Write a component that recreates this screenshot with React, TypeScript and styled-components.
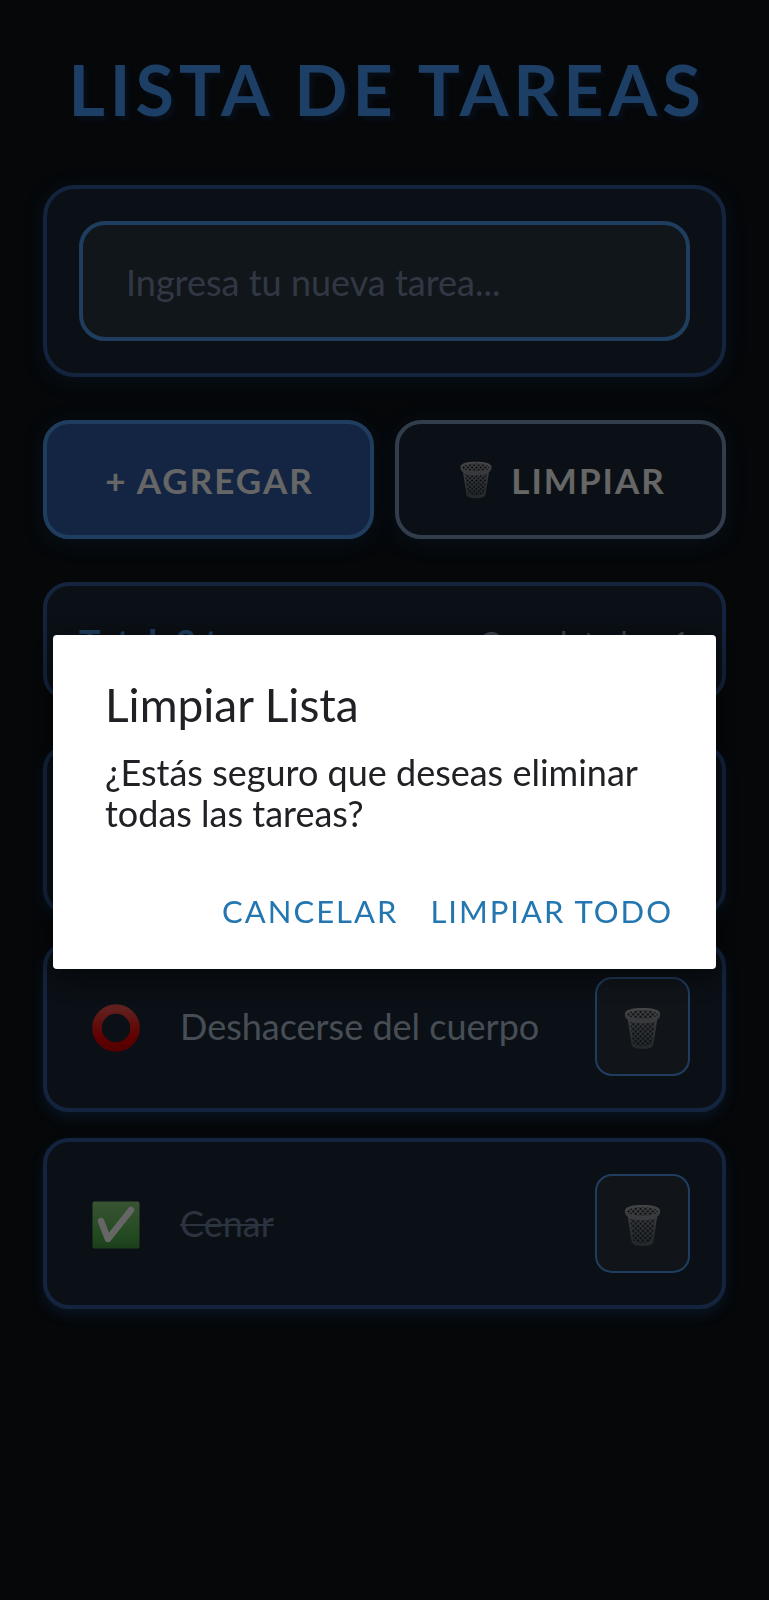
import React, { useId } from 'react';
import styled, { createGlobalStyle } from 'styled-components';

const GlobalStyle = createGlobalStyle`
  *, *::before, *::after { box-sizing: border-box; }
  body {
    margin: 0;
    background: #0d1218;
    font-family: Lato, "Liberation Sans", sans-serif;
  }
  button, input { font-family: inherit; margin: 0; }
  h1, h2, p, ul { margin: 0; padding: 0; }
`;

const Screen = styled.main`
  display: flex;
  flex-direction: column;
  gap: 43px;
  min-height: 100vh;
  padding: 49px 43px;
  background: #0d1218;
`;

const Title = styled.h1`
  height: 93px;
  padding-left: 5px;
  line-height: 80px;
  text-align: center;
  white-space: nowrap;
  font-size: 70px;
  font-weight: 700;
  letter-spacing: 5px;
  color: #4a9eff;
  text-shadow: 4px 4px 4px rgba(30, 90, 170, 0.25);
`;

const Card = styled.section`
  display: flex;
  align-items: center;
  justify-content: space-between;
  padding: 32px;
  background: #1b2837;
  border: 4px solid #325a9c;
  border-radius: 32px;
  box-shadow: 0 4px 20px rgba(40, 110, 190, 0.25);
`;

const TaskInput = styled.input`
  width: 100%;
  height: 120px;
  padding: 2px 43px 0;
  font-size: 36px;
  color: #ffffff;
  background: #2b3745;
  border: 4px solid #4f9cee;
  border-radius: 26px;
  outline: none;
  &::placeholder { color: #7a8ca8; opacity: 1; }
`;

const Actions = styled.div`
  display: grid;
  grid-template-columns: 1fr 1fr;
  gap: 21px;
`;

const ActionButton = styled.button<{ $primary?: boolean }>`
  display: flex;
  align-items: center;
  justify-content: center;
  gap: 16px;
  height: 119px;
  padding: 0 0 0 2px;
  font-size: 35px;
  font-weight: 700;
  letter-spacing: 2px;
  color: #ffffff;
  background: ${(p) => (p.$primary ? '#305ea5' : '#1b2837')};
  border: 4px solid ${(p) => (p.$primary ? '#4f9cee' : '#7a98bc')};
  border-radius: 26px;
  box-shadow: 0 4px 20px rgba(40, 110, 190, 0.25);
`;

const Stats = styled(Card)`
  height: 119px;
  border-radius: 26px;
  box-shadow: none;
`;

const Total = styled.span`
  font-size: 36px;
  font-weight: 700;
  color: #4f9cee;
`;

const Completed = styled.span`
  font-size: 31px;
  color: #a0b0c8;
`;

const TaskList = styled.ul`
  display: flex;
  flex-direction: column;
  gap: 26px;
  list-style: none;
`;

const TaskRow = styled(Card)`
  justify-content: flex-start;
  border-radius: 26px;
  box-shadow: 0 6px 12px rgba(40, 110, 190, 0.35);
`;

const StatusButton = styled.button`
  display: flex;
  padding: 3px 0 0;
  margin: 0 40px 0 13px;
  background: none;
  border: 0;
`;

const TaskText = styled.span<{ $done: boolean }>`
  flex: 1;
  line-height: 42px;
  padding-bottom: 2px;
  font-size: 36px;
  color: ${(p) => (p.$done ? '#6a7f9c' : '#b2c0d2')};
  text-decoration: ${(p) => (p.$done ? 'line-through' : 'none')};
  text-decoration-thickness: 2px;
`;

const DeleteButton = styled.button`
  display: flex;
  align-items: center;
  justify-content: center;
  width: 95px;
  height: 99px;
  padding: 3px 0 0;
  background: #2b3542;
  border: 2px solid #4f9cee;
  border-radius: 17px;
`;

const Backdrop = styled.div`
  position: fixed;
  inset: 0;
  display: flex;
  align-items: center;
  justify-content: center;
  padding: 4px 53px 0;
  background: rgba(0, 0, 0, 0.6);
`;

const Dialog = styled.div`
  width: 100%;
  padding: 44px 32px 18px 52px;
  color: #202124;
  background: #ffffff;
  border-radius: 4px;
  box-shadow: 0 8px 30px rgba(0, 0, 0, 0.6);
`;

const DialogTitle = styled.h2`
  line-height: 52px;
  font-size: 46px;
  font-weight: 400;
`;

const DialogText = styled.p`
  margin-top: 21px;
  line-height: 41px;
  font-size: 36px;
`;

const DialogActions = styled.div`
  display: flex;
  justify-content: flex-end;
  gap: 10px;
  margin-top: 37px;
`;

const DialogButton = styled.button`
  height: 80px;
  padding: 0 11px;
  font-size: 31px;
  letter-spacing: 2px;
  color: #2376b0;
  background: none;
  border: 0;
`;

function Wastebasket({ size }: { size: number }) {
  const id = useId();
  return (
    <svg width={size} height={size} viewBox="0 0 44 44" aria-hidden="true">
      <defs>
        <linearGradient id={`${id}m`} x1="0" y1="0" x2="0" y2="1">
          <stop offset="0" stopColor="#a9adb1" />
          <stop offset="1" stopColor="#59636c" />
        </linearGradient>
        <pattern id={`${id}h`} width="5" height="5" patternUnits="userSpaceOnUse">
          <path d="M2.5 1L4 2.5L2.5 4L1 2.5Z M0 -1.5L1.5 0L0 1.5L-1.5 0Z M5 -1.5L6.5 0L5 1.5L3.5 0Z M0 3.5L1.5 5L0 6.5L-1.5 5Z M5 3.5L6.5 5L5 6.5L3.5 5Z" fill="#12181f" />
        </pattern>
      </defs>
      <path d="M4 7C4 3 11 1 22 1S40 3 40 7C40 10 39 12 37 13L33 39C32 42 28 43 22 43S12 42 11 39L7 13C5 12 4 10 4 7Z" fill={`url(#${id}m)`} />
      <ellipse cx="22" cy="7.5" rx="15.5" ry="4.5" fill={`url(#${id}h)`} />
      <path d="M9 15Q22 18 35 15L31.5 38Q22 42 12.5 38Z" fill={`url(#${id}h)`} />
      <path d="M5 9Q9 14 22 14T39 9" fill="none" stroke="#8a8f94" strokeWidth="1.6" />
    </svg>
  );
}

function StatusIcon({ done }: { done: boolean }) {
  const id = useId();
  return (
    <svg width="48" height="48" viewBox="0 0 48 48" aria-hidden="true">
      <defs>
        <linearGradient id={id} x1="0" y1="0" x2="0" y2="1">
          <stop offset="0" stopColor={done ? '#8fd080' : '#f0504a'} />
          <stop offset="0.75" stopColor={done ? '#55b850' : '#f40000'} />
          <stop offset="1" stopColor={done ? '#459a42' : '#d80000'} />
        </linearGradient>
      </defs>
      {done ? (
        <>
          <rect x="0.5" y="0.5" width="47" height="47" rx="2" fill={`url(#${id})`} />
          <path d="M9 20L16 38L39 9" fill="none" stroke="#ffffff" strokeWidth="6.5" strokeLinecap="round" strokeLinejoin="round" />
        </>
      ) : (
        <circle cx="24" cy="24" r="19" fill="none" stroke={`url(#${id})`} strokeWidth="9.5" />
      )}
    </svg>
  );
}

const tasks = [
  { id: 1, text: '', done: false },
  { id: 2, text: 'Deshacerse del cuerpo', done: false },
  { id: 3, text: 'Cenar', done: true },
];

export default function App() {
  return (
    <>
      <GlobalStyle />
      <Screen>
        <Title>LISTA DE TAREAS</Title>
        <Card>
          <TaskInput aria-label="Nueva tarea" placeholder="Ingresa tu nueva tarea..." />
        </Card>
        <Actions>
          <ActionButton type="button" $primary>+ AGREGAR</ActionButton>
          <ActionButton type="button"><Wastebasket size={38} />LIMPIAR</ActionButton>
        </Actions>
        <Stats>
          <Total>Total: 3 tareas</Total>
          <Completed>Completadas: 1</Completed>
        </Stats>
        <TaskList>
          {tasks.map((task) => (
            <TaskRow as="li" key={task.id}>
              <StatusButton type="button" aria-pressed={task.done} aria-label={`Completar tarea ${task.id}`}>
                <StatusIcon done={task.done} />
              </StatusButton>
              <TaskText $done={task.done}>{task.text}</TaskText>
              <DeleteButton type="button" aria-label={`Eliminar tarea ${task.id}`}>
                <Wastebasket size={43} />
              </DeleteButton>
            </TaskRow>
          ))}
        </TaskList>
      </Screen>
      <Backdrop>
        <Dialog role="alertdialog" aria-modal="true" aria-labelledby="dialog-title" aria-describedby="dialog-text">
          <DialogTitle id="dialog-title">Limpiar Lista</DialogTitle>
          <DialogText id="dialog-text">¿Estás seguro que deseas eliminar todas las tareas?</DialogText>
          <DialogActions>
            <DialogButton type="button">CANCELAR</DialogButton>
            <DialogButton type="button">LIMPIAR TODO</DialogButton>
          </DialogActions>
        </Dialog>
      </Backdrop>
    </>
  );
}
